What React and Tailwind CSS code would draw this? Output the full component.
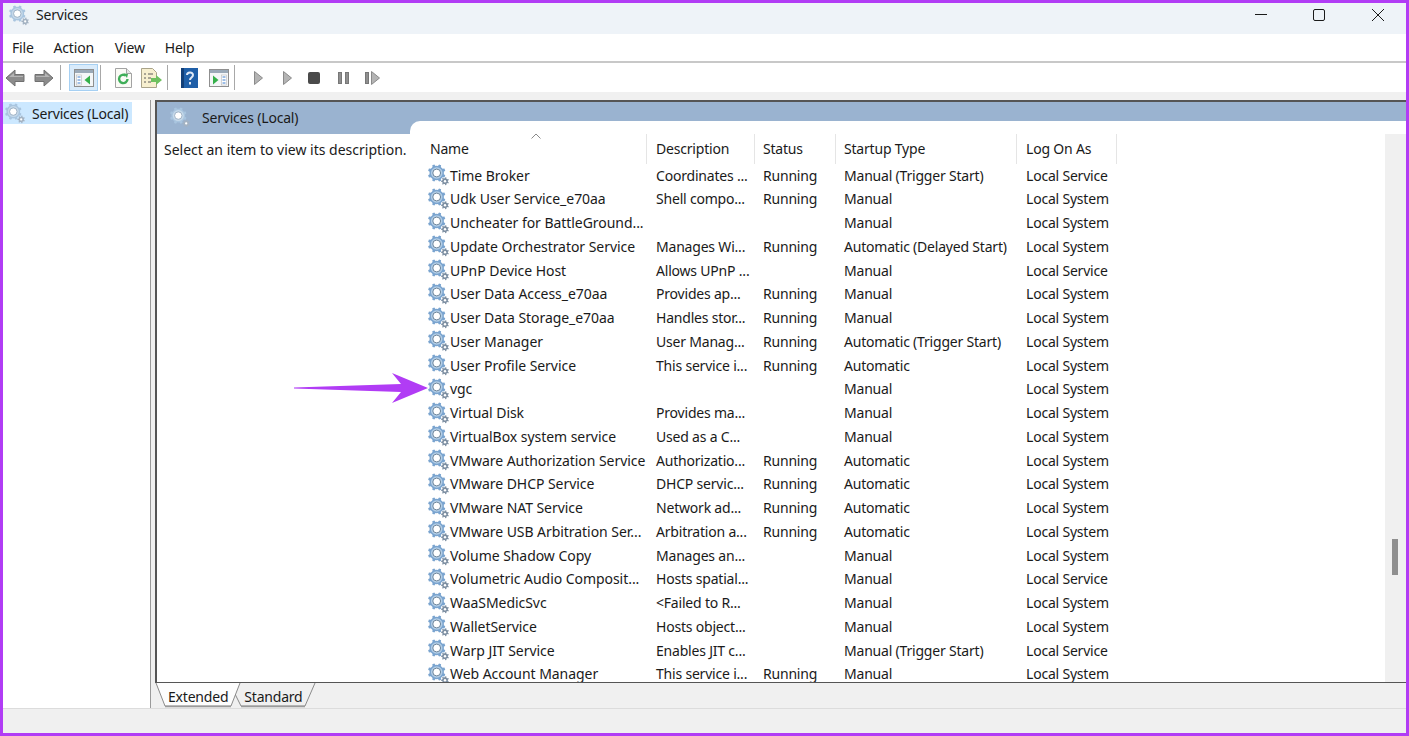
import React from 'react';

const rows = [
  ['Time Broker', 'Coordinates ...', 'Running', 'Manual (Trigger Start)', 'Local Service'],
  ['Udk User Service_e70aa', 'Shell compo...', 'Running', 'Manual', 'Local System'],
  ['Uncheater for BattleGround...', '', '', 'Manual', 'Local System'],
  ['Update Orchestrator Service', 'Manages Wi...', 'Running', 'Automatic (Delayed Start)', 'Local System'],
  ['UPnP Device Host', 'Allows UPnP ...', '', 'Manual', 'Local Service'],
  ['User Data Access_e70aa', 'Provides ap...', 'Running', 'Manual', 'Local System'],
  ['User Data Storage_e70aa', 'Handles stor...', 'Running', 'Manual', 'Local System'],
  ['User Manager', 'User Manag...', 'Running', 'Automatic (Trigger Start)', 'Local System'],
  ['User Profile Service', 'This service i...', 'Running', 'Automatic', 'Local System'],
  ['vgc', '', '', 'Manual', 'Local System'],
  ['Virtual Disk', 'Provides ma...', '', 'Manual', 'Local System'],
  ['VirtualBox system service', 'Used as a C...', '', 'Manual', 'Local System'],
  ['VMware Authorization Service', 'Authorizatio...', 'Running', 'Automatic', 'Local System'],
  ['VMware DHCP Service', 'DHCP servic...', 'Running', 'Automatic', 'Local System'],
  ['VMware NAT Service', 'Network ad...', 'Running', 'Automatic', 'Local System'],
  ['VMware USB Arbitration Ser...', 'Arbitration a...', 'Running', 'Automatic', 'Local System'],
  ['Volume Shadow Copy', 'Manages an...', '', 'Manual', 'Local System'],
  ['Volumetric Audio Composit...', 'Hosts spatial...', '', 'Manual', 'Local Service'],
  ['WaaSMedicSvc', '<Failed to R...', '', 'Manual', 'Local System'],
  ['WalletService', 'Hosts object...', '', 'Manual', 'Local System'],
  ['Warp JIT Service', 'Enables JIT c...', '', 'Manual (Trigger Start)', 'Local Service'],
  ['Web Account Manager', 'This service i...', 'Running', 'Manual', 'Local System'],
];

function gearPath(cx, cy, inner, outer, teeth) {
  let d = '';
  const step = (Math.PI * 2) / teeth;
  for (let i = 0; i < teeth; i++) {
    const a = i * step + step / 2;
    const pts = [
      [inner, a - step * 0.5],
      [inner, a - step * 0.28],
      [outer, a - step * 0.16],
      [outer, a + step * 0.16],
      [inner, a + step * 0.28],
    ];
    pts.forEach(([r, t], j) => {
      const x = (cx + r * Math.cos(t)).toFixed(2);
      const y = (cy + r * Math.sin(t)).toFixed(2);
      d += (i === 0 && j === 0 ? 'M' : 'L') + x + ' ' + y;
    });
  }
  return d + 'Z';
}

const bigGear = gearPath(8.7, 9, 7.2, 8.9, 8);
const smallGear = gearPath(17, 17.2, 2.9, 4, 7);

function Gear({ light, className }) {
  return (
    <svg viewBox="0 0 21 22" className={className}>
      <path d={smallGear} fill={light ? '#a3b2c2' : '#7d8fa2'} />
      <circle cx="17" cy="17.2" r="1.2" fill="#fff" />
      <path d={bigGear} fill={light ? '#a9c5df' : '#7aa4cf'} />
      <circle cx="8.7" cy="9" r="5.8" fill={light ? '#c6d9ea' : '#b2cde6'} />
      <circle cx="8.7" cy="9" r="3.9" fill="#fff" stroke={light ? '#93a9bd' : '#5d7891'} strokeWidth="0.9" />
    </svg>
  );
}

function NavArrow({ flip, className }) {
  return (
    <svg viewBox="0 0 20 18" className={className}>
      <path
        d={flip ? 'M1 5.5h9V1l9 8-9 8v-4.5H1z' : 'M19 5.5h-9V1L1 9l9 8v-4.5h9z'}
        fill="#8c8c8c"
        stroke="#707070"
      />
      <path d={flip ? 'M2 7h9V4l5 4H2z' : 'M18 7H9V4L4 8h14z'} fill="#b5b5b5" />
    </svg>
  );
}

function Play({ className }) {
  return (
    <svg viewBox="0 0 9 14" className={className}>
      <path d="M.5.5 8.5 7l-8 6.5z" fill="#b4b4b4" stroke="#8a8a8a" />
    </svg>
  );
}

function Console({ back, className }) {
  return (
    <svg viewBox="0 0 20 18" className={className}>
      <rect x=".5" y=".5" width="19" height="17" fill="#f4f6f8" stroke="#8f8f8f" />
      <rect x="1" y="1" width="18" height="3" fill="#9aa9b8" />
      {back ? (
        <g>
          <rect x="2.5" y="6" width="5" height="10" fill="#fff" stroke="#b9b9b9" strokeWidth=".6" />
          <path d="M3.5 8h3M3.5 11h3M3.5 14h3" stroke="#3f7fcf" />
          <path d="M16 6.5v9L10.5 11z" fill="#35b04a" />
        </g>
      ) : (
        <g>
          <rect x="12.5" y="6" width="5" height="10" fill="#fff" stroke="#b9b9b9" strokeWidth=".6" />
          <path d="M13.5 8h3M13.5 11h3M13.5 14h3" stroke="#3f7fcf" />
          <path d="M4 6.5v9L9.5 11z" fill="#35b04a" />
        </g>
      )}
    </svg>
  );
}

function Sep({ className }) {
  return <div className={'w-px h-[25px] bg-[#a8a8a8] ' + className} />;
}

function Toolbar() {
  return (
    <div className="h-[29px] bg-white flex items-center">
      <NavArrow className="w-5 h-[18px] ml-[2px]" />
      <NavArrow flip className="w-5 h-[18px] ml-[9px]" />
      <Sep className="ml-[6px]" />
      <div className="w-[29px] h-[27px] ml-[8px] flex items-center justify-center bg-[#d9ebfb] border border-[#a6d0f3]">
        <Console back className="w-5 h-[18px]" />
      </div>
      <Sep className="ml-[2px]" />
      <svg viewBox="0 0 17 20" className="w-[17px] h-5 ml-[14px]">
        <path d="M.5.5h11l5 5v14H.5z" fill="#fbfbf6" stroke="#a3a3a3" />
        <path d="M11.5.5v5h5" fill="#e6e6e6" stroke="#a3a3a3" />
        <path d="M12.5 11a4.2 4.2 0 1 1-1.6-3.4" fill="none" stroke="#3fae58" strokeWidth="2.4" />
        <path d="M9 5.5l4 .5-1 4z" fill="#3fae58" />
      </svg>
      <svg viewBox="0 0 21 20" className="w-[21px] h-5 ml-[9px]">
        <path d="M.5.5h11l4 4v15H.5z" fill="#f7efcf" stroke="#a9a389" />
        <path d="M3 6h2M7 6h5M3 10h2M7 10h3M3 14h2M7 14h3" stroke="#5a5a5a" />
        <path d="M10 10h5V7l6 5-6 5v-3h-5z" fill="#6fc05f" />
      </svg>
      <Sep className="ml-[5px]" />
      <svg viewBox="0 0 17 20" className="w-[17px] h-5 ml-[13px]">
        <rect width="17" height="20" fill="#1f5fa8" />
        <rect width="3" height="20" fill="#123f78" />
        <path d="M6 7c0-3 6-3.5 6 0 0 2.500-3 2.500-3 5M9 14v2.500" fill="none" stroke="#dfe8f5" strokeWidth="2" />
      </svg>
      <Console className="w-5 h-[18px] ml-[11px]" />
      <Sep className="ml-[5px]" />
      <Play className="w-[9px] h-[14px] ml-[19px]" />
      <Play className="w-[9px] h-[14px] ml-[20px]" />
      <div className="w-3 h-3 ml-[16px] rounded-[2px] bg-[#4a4a4a]" />
      <div className="w-[4px] h-3 ml-[18px] bg-[#8f8f8f] border border-[#777777]" />
      <div className="w-[4px] h-3 ml-[3px] bg-[#8f8f8f] border border-[#777777]" />
      <div className="w-[4px] h-3 ml-[16px] bg-[#8f8f8f] border border-[#777777]" />
      <Play className="w-[9px] h-[14px] ml-[2px]" />
    </div>
  );
}

function Row({ row }) {
  return (
    <div className="grid grid-cols-[222px_108px_81px_181px_100px] h-[23.75px] pb-[2px] items-center whitespace-nowrap">
      <div className="flex items-center pl-[3px]">
        <Gear className="w-[21px] h-[22px] shrink-0" />
        <span className="ml-px tracking-[-0.05px]">{row[0]}</span>
      </div>
      <div className="pl-[9px]">{row[1]}</div>
      <div className="pl-[8px]">{row[2]}</div>
      <div className="pl-[8px]">{row[3]}</div>
      <div className="pl-[9px]">{row[4]}</div>
    </div>
  );
}

function HeaderCell({ children, className }) {
  return (
    <div className={'h-[30px] pb-[2px] flex items-center border-r border-[#e5e5e5] ' + className}>
      {children}
    </div>
  );
}

function ServiceTable() {
  return (
    <div className="flex-1 min-w-0 flex bg-white rounded-tl-[10px] overflow-hidden">
      <div className="flex-1 min-w-0 pl-[15px] pt-[13px] overflow-hidden">
        <div className="relative grid grid-cols-[222px_108px_81px_181px_100px]">
          <svg viewBox="0 0 10 6" className="absolute left-[106px] top-[-1px] w-[10px] h-[6px]">
            <path d="M.5 5.500 5 1l4.500 4.500" fill="none" stroke="#8a8a8a" />
          </svg>
          <HeaderCell className="pl-[5px]">Name</HeaderCell>
          <HeaderCell className="pl-[9px]">Description</HeaderCell>
          <HeaderCell className="pl-[8px]">Status</HeaderCell>
          <HeaderCell className="pl-[8px]">Startup Type</HeaderCell>
          <HeaderCell className="pl-[9px]">Log On As</HeaderCell>
        </div>
        {rows.map((row) => (
          <Row key={row[0]} row={row} />
        ))}
      </div>
      <div className="w-[21px] mt-[13px] bg-[#f0f0f0] shrink-0">
        <div className="w-[6px] h-[36px] ml-[7px] mt-[405px] bg-[#8f8f8f]" />
      </div>
    </div>
  );
}

function Tabs() {
  return (
    <div className="relative h-[25px] flex pl-[13px] pt-[3px]">
      <svg viewBox="0 0 162 25" className="absolute left-0 top-0 w-[162px] h-[25px]">
        <path d="M1 0 10 23H76L85 0z" fill="#fdfdfd" />
        <path d="M1 0 10 23H76L85 0" fill="none" stroke="#8a8a8a" />
        <path d="M80.500 12 86 23H150L160 0" fill="none" stroke="#8a8a8a" />
        <path d="M10 23.500H76M86 23.500H150" stroke="#9a9a9a" strokeWidth="1.5" />
      </svg>
      <span className="relative">Extended</span>
      <span className="relative ml-[16px]">Standard</span>
    </div>
  );
}

export default function App() {
  return (
    <div
      className="relative w-[1409px] h-[736px] overflow-hidden flex flex-col border-[3px] border-[#b13cf5] bg-[#f0f0f0] text-[14px] tracking-[-0.2px] text-[#1a1a1a]"
      style={{ fontFamily: '"Noto Sans", sans-serif' }}
    >
      <div className="h-[31px] shrink-0 flex items-center pb-[8px] bg-[#eef3f8]">
        <Gear light className="w-5 h-[21px] ml-[6px] mt-[2px]" />
        <span className="ml-[7px]">Services</span>
        <div className="ml-auto mr-[22px] flex items-center">
          <div className="w-3 h-px bg-[#1a1a1a]" />
          <div className="w-3 h-3 ml-[46px] rounded-[2px] border border-[#1a1a1a]" />
          <svg viewBox="0 0 12 12" className="w-3 h-3 ml-[47px]">
            <path d="M0 0l12 12M12 0 0 12" stroke="#1a1a1a" />
          </svg>
        </div>
      </div>
      <div className="h-[27px] shrink-0 flex items-center pb-px bg-white">
        <span className="ml-[9px]">File</span>
        <span className="ml-[20px]">Action</span>
        <span className="ml-[21px]">View</span>
        <span className="ml-[20px]">Help</span>
      </div>
      <div className="h-[2px] shrink-0 bg-[#c8c8c8]" />
      <Toolbar />
      <div className="flex-1 min-h-0 flex pt-[8px]">
        <div className="w-[148px] shrink-0 bg-white border-r border-b border-[#9a9a9a] h-[610px]">
          <div className="flex items-center w-[129px] h-[22px] mt-[2px] bg-[#cce8ff]">
            <Gear light className="w-5 h-[21px] ml-[2px] shrink-0" />
            <span className="ml-[7px] whitespace-nowrap">Services (Local)</span>
          </div>
        </div>
        <div className="flex-1 min-w-0 flex flex-col ml-[4px]">
          <div className="h-[584px] flex flex-col border-l-2 border-t-2 border-b border-[#555555] bg-[#9ab3d0] overflow-hidden">
            <div className="h-[19px] shrink-0 flex items-center pt-[11px]">
              <Gear light className="w-5 h-[21px] ml-[13px]" />
              <span className="ml-[12px]">Services (Local)</span>
            </div>
            <div className="flex-1 min-h-0 flex">
              <div className="w-[253px] shrink-0 flex flex-col">
                <div className="h-[13px] shrink-0" />
                <div className="flex-1 bg-white pt-[5px] pl-[7px] whitespace-nowrap tracking-normal">
                  Select an item to view its description.
                </div>
              </div>
              <ServiceTable />
            </div>
          </div>
          <Tabs />
        </div>
      </div>
      <div className="h-[25px] shrink-0 border-t border-[#dcdcdc] bg-[#f0f0f0]" />
      <svg viewBox="0 0 136 31" className="absolute left-[290px] top-[370px] w-[136px] h-[31px]">
        <path d="M1 14.500 108 11 99 0 135 15 99 30 108 19 1 15.500z" fill="#b13cf5" />
      </svg>
    </div>
  );
}
